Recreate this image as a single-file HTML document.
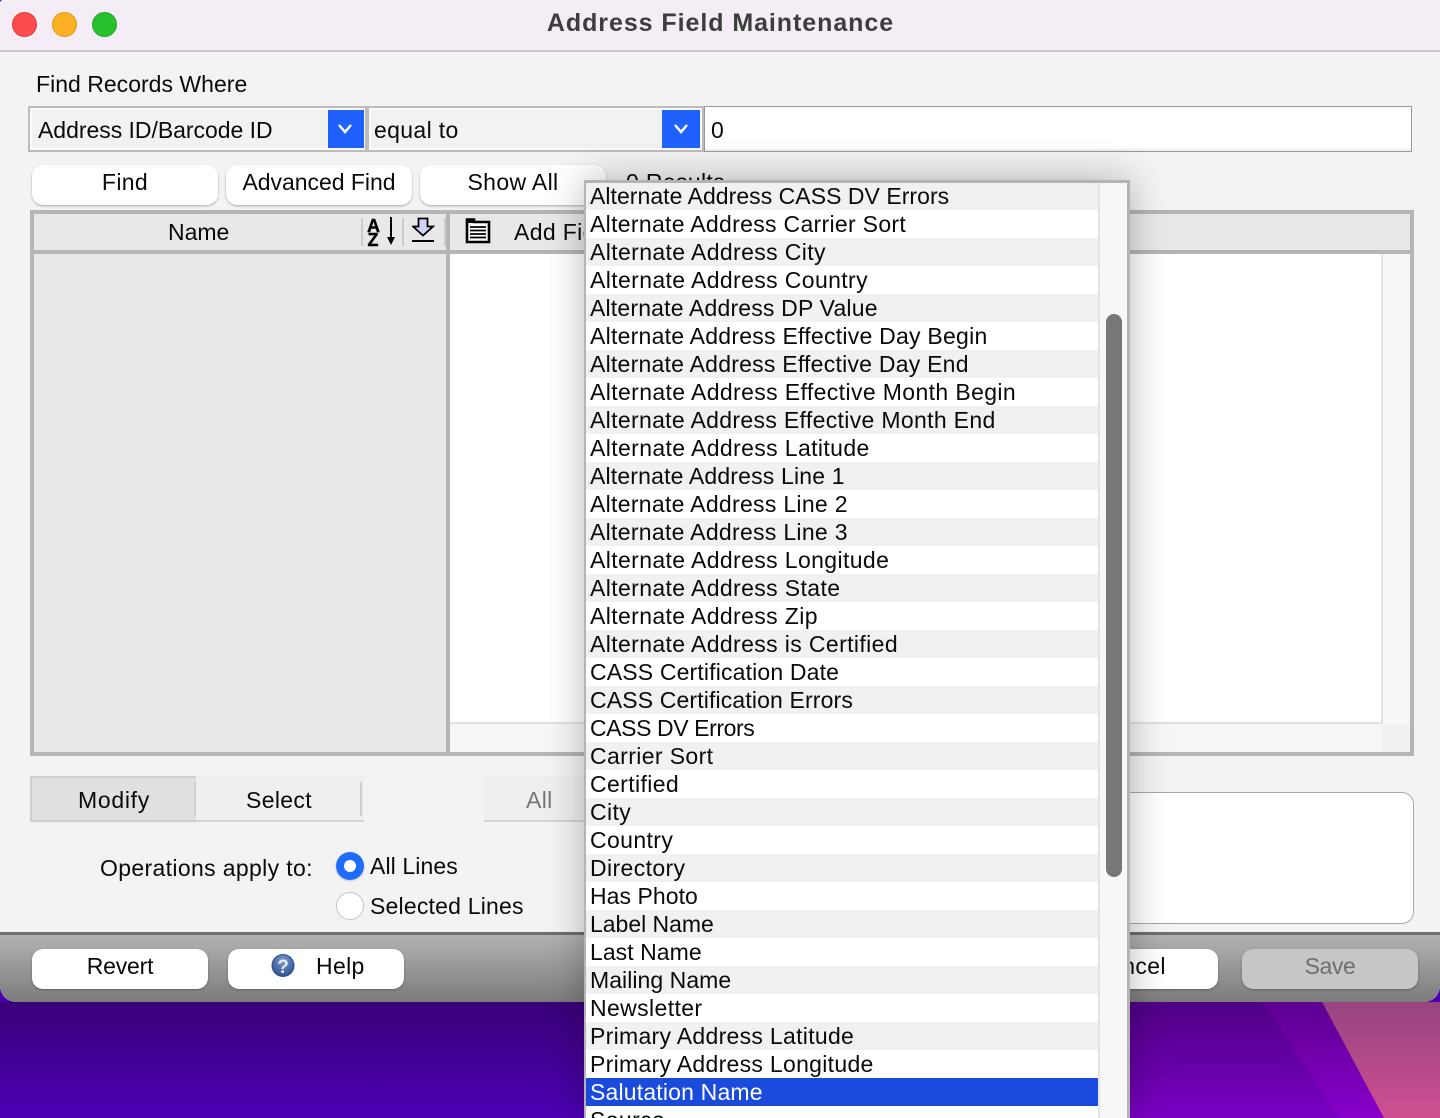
<!DOCTYPE html>
<html><head><meta charset="utf-8"><title>Address Field Maintenance</title>
<style>
*{box-sizing:border-box;margin:0;padding:0}
html,body{width:1440px;height:1118px;overflow:hidden}
body{position:relative;background:#4a00b0;font-family:"Liberation Sans",sans-serif;color:#0a0a0a;font-size:23px}
.a{position:absolute}
.t{position:absolute;white-space:nowrap;line-height:28px;letter-spacing:.35px}
.btn{position:absolute;background:#fff;border-radius:11px;box-shadow:0 1px 2px rgba(0,0,0,.3);text-align:center;white-space:nowrap;letter-spacing:.35px}
.row{height:28px;line-height:28px;padding-left:4px;white-space:nowrap;letter-spacing:.38px;font-size:23px}
.row:nth-child(odd){background:#f0f2f1}
.row:nth-child(even){background:#fff}
.sel-arrow{position:absolute;background:#1f60ff}
.box{position:absolute;background:#f2f2f2;border:2px solid #bcbcbc;box-shadow:inset 0 0 0 2px #fafafa}
</style></head><body>
<div class="a" style="left:0;top:1002px;width:1440px;height:116px;background:linear-gradient(180deg,#3a0078 0%,#4c00b4 100%)"></div>
<svg class="a" style="left:1130px;top:1002px" width="310" height="116"><defs>
<linearGradient id="g0" x1="0" y1="0" x2="0" y2="1"><stop offset="0" stop-color="#4f0085"/><stop offset="1" stop-color="#7a00c4"/></linearGradient>
<linearGradient id="g1" x1="0" y1="0" x2="0" y2="1"><stop offset="0" stop-color="#5e0090"/><stop offset="1" stop-color="#8800cc"/></linearGradient>
<linearGradient id="g2" x1="0" y1="0" x2="0" y2="1"><stop offset="0" stop-color="#974480"/><stop offset="1" stop-color="#cf4f92"/></linearGradient>
</defs><rect width="310" height="116" fill="url(#g0)"/><polygon points="133,0 192,0 254,116 210,116" fill="url(#g1)"/><polygon points="192,0 310,0 310,116 254,116" fill="url(#g2)"/></svg>

<div class="a" style="left:0;top:0;width:1440px;height:1002px;background:#f3f3f3;border-radius:3px 0 16px 16px;overflow:hidden">
  <div class="a" style="left:0;top:0;width:1440px;height:52px;background:#f5edf5;border-bottom:2px solid #c9c5c9"></div>
  <div class="a" style="left:12px;top:12px;width:25px;height:25px;border-radius:50%;background:#fc4c4c;border:1px solid #dd3d3d"></div>
  <div class="a" style="left:52px;top:12px;width:25px;height:25px;border-radius:50%;background:#fdb024;border:1px solid #e09a20"></div>
  <div class="a" style="left:92px;top:12px;width:25px;height:25px;border-radius:50%;background:#28c12e;border:1px solid #22a828"></div>
  <div class="t" style="left:0;top:9px;width:1441px;text-align:center;font-weight:bold;font-size:25px;color:#3d3d3d;letter-spacing:.94px">Address Field Maintenance</div>

  <div class="t" style="left:36px;top:70px;letter-spacing:.02px">Find Records Where</div>

  <div class="box" style="left:28px;top:106px;width:339px;height:46px"></div>
  <div class="t" style="left:38px;top:116px;letter-spacing:-.03px">Address ID/Barcode ID</div>
  <div class="sel-arrow" style="left:328px;top:110px;width:36px;height:38px"></div>
  <svg class="a" style="left:328px;top:110px" width="36" height="38"><path d="M11 15l6 7 6-7" fill="none" stroke="#fff" stroke-width="2.400"/></svg>
  <div class="box" style="left:367px;top:106px;width:337px;height:46px"></div>
  <div class="t" style="left:374px;top:116px">equal to</div>
  <div class="sel-arrow" style="left:662px;top:110px;width:38px;height:38px"></div>
  <svg class="a" style="left:662px;top:110px" width="38" height="38"><path d="M13 15l6 7 6-7" fill="none" stroke="#fff" stroke-width="2.400"/></svg>
  <div class="a" style="left:704px;top:106px;width:708px;height:46px;background:#fff;border:1px solid #999;box-shadow:inset 0 -2px 0 #eee"></div>
  <div class="t" style="left:711px;top:116px">0</div>

  <div class="btn" style="left:32px;top:165px;width:186px;height:40px;line-height:35px">Find</div>
  <div class="btn" style="left:226px;top:165px;width:186px;height:40px;line-height:35px;letter-spacing:-.03px">Advanced Find</div>
  <div class="btn" style="left:420px;top:165px;width:186px;height:40px;line-height:35px">Show All</div>
  <div class="t" style="left:626px;top:168px">0 Results</div>

  <div class="a" style="left:30px;top:210px;width:1384px;height:546px;background:#fff;border:4px solid #b5b5b5"></div>
  <div class="a" style="left:34px;top:214px;width:1376px;height:36px;background:#e8e8e8"></div>
  <div class="a" style="left:34px;top:250px;width:1376px;height:4px;background:#b5b5b5"></div>
  <div class="a" style="left:34px;top:254px;width:412px;height:498px;background:#e8e8e8"></div>
  <div class="a" style="left:446px;top:214px;width:4px;height:538px;background:#b5b5b5"></div>
  <div class="t" style="left:168px;top:218px;letter-spacing:0">Name</div>
  <div class="a" style="left:361px;top:218px;width:2px;height:28px;background:#ccc"></div>
  <div class="a" style="left:402px;top:218px;width:2px;height:28px;background:#ccc"></div>
  <div class="a" style="left:444px;top:218px;width:2px;height:28px;background:#ccc"></div>
  <svg class="a" style="left:364px;top:216px" width="36" height="34"><text x="3" y="16" font-family="Liberation Sans" font-weight="bold" font-size="18" fill="#000" stroke="#000" stroke-width=".4">A</text><text x="3.500" y="30" font-family="Liberation Sans" font-weight="bold" font-size="18" fill="#000" stroke="#000" stroke-width=".4">Z</text><path d="M27 1v24" stroke="#000" stroke-width="2"/><path d="M23 21h8l-4 8z" fill="#000"/></svg>
  <svg class="a" style="left:412px;top:217px" width="24" height="28"><path d="M6.500 1.500h9v8h5.500l-10 9-10-9h5.500z" fill="#d2d2ff" stroke="#000" stroke-width="1.800"/><path d="M0 24h22" stroke="#000" stroke-width="2"/></svg>
  <svg class="a" style="left:465px;top:217px" width="26" height="28"><path d="M2 2.500h7v2.500h15v20H2z" fill="#fff" stroke="#000" stroke-width="2.600"/><path d="M2 2h7v4H2z" fill="#000"/><path d="M5 10h16M5 13.500h16M5 17h16M5 20.500h16" stroke="#000" stroke-width="1.800"/></svg>
  <div class="t" style="left:514px;top:218px">Add Field</div>
  <div class="a" style="left:1381px;top:254px;width:29px;height:498px;background:#f7f7f7;border-left:2px solid #e2e2e2"></div>
  <div class="a" style="left:450px;top:722px;width:932px;height:30px;background:#f6f6f6;border-top:2px solid #e2e2e2"></div>
  <div class="a" style="left:1382px;top:724px;width:28px;height:28px;background:#f1f1f1"></div>

  <div class="a" style="left:30px;top:776px;width:334px;height:46px;background:#efefef;border-bottom:2px solid #d4d4d4"></div>
  <div class="a" style="left:30px;top:776px;width:166px;height:46px;background:#e0e0e0;border:2px solid #cfcfcf;border-right:none"></div>
  <div class="a" style="left:194px;top:782px;width:2px;height:34px;background:#cfcfcf"></div>
  <div class="a" style="left:360px;top:782px;width:2px;height:34px;background:#cfcfcf"></div>
  <div class="t" style="left:78px;top:786px;letter-spacing:.7px">Modify</div>
  <div class="t" style="left:246px;top:786px">Select</div>
  <div class="a" style="left:484px;top:776px;width:110px;height:46px;background:#efefef;border-bottom:2px solid #d4d4d4"></div>
  <div class="t" style="left:526px;top:786px;color:#777">All</div>

  <div class="a" style="left:900px;top:792px;width:514px;height:132px;background:#fff;border:1px solid #a8a8a8;border-radius:12px"></div>

  <div class="t" style="left:100px;top:854px">Operations apply to:</div>
  <div class="a" style="left:336px;top:852px;width:28px;height:28px;border-radius:50%;background:#1f6bff;box-shadow:0 1px 2px rgba(0,0,0,.2)"></div>
  <div class="a" style="left:344px;top:860px;width:12px;height:12px;border-radius:50%;background:#fff"></div>
  <div class="t" style="left:370px;top:852px;letter-spacing:.1px">All Lines</div>
  <div class="a" style="left:336px;top:892px;width:28px;height:28px;border-radius:50%;background:#fff;border:1px solid #c4c4c4"></div>
  <div class="t" style="left:370px;top:892px;letter-spacing:.2px">Selected Lines</div>

  <div class="a" style="left:0;top:932px;width:1440px;height:70px;background:linear-gradient(180deg,#b2b2b2 0%,#7c7c7c 100%);border-top:3px solid #6e6e6e"></div>
  <div class="btn" style="left:32px;top:949px;width:176px;height:40px;line-height:35px;letter-spacing:-.2px">Revert</div>
  <div class="btn" style="left:228px;top:949px;width:176px;height:40px;line-height:35px;text-align:left;padding-left:88px">Help</div>
  <svg class="a" style="left:271px;top:953px" width="24" height="24"><defs><radialGradient id="h" cx=".5" cy=".3" r=".75"><stop offset="0" stop-color="#7a9ad0"/><stop offset="1" stop-color="#274a8a"/></radialGradient></defs><circle cx="12" cy="12.500" r="11" fill="url(#h)" stroke="#2b4f88"/><text x="12" y="20" text-anchor="middle" font-family="Liberation Sans" font-weight="bold" font-size="19" fill="#e8e8f0">?</text></svg>
  <div class="btn" style="left:1040px;top:949px;width:178px;height:40px;line-height:35px">Cancel</div>
  <div class="btn" style="left:1242px;top:949px;width:176px;height:40px;line-height:35px;background:#c6c6c6;color:#6f6f6f;letter-spacing:-.4px">Save</div>
</div>

<div class="a" style="left:584px;top:180px;width:546px;height:938px;background:#fff;border:3px solid #b4b4b4;border-left-width:2px;border-bottom:none;box-shadow:0 0 36px rgba(0,0,0,.28);overflow:hidden">
  <div style="width:512px;margin-top:-1px">
    <div class="row" style="letter-spacing:.04px">Alternate Address CASS DV Errors</div>
    <div class="row" style="letter-spacing:.31px">Alternate Address Carrier Sort</div>
    <div class="row">Alternate Address City</div>
    <div class="row">Alternate Address Country</div>
    <div class="row" style="letter-spacing:.18px">Alternate Address DP Value</div>
    <div class="row" style="letter-spacing:.25px">Alternate Address Effective Day Begin</div>
    <div class="row" style="letter-spacing:.24px">Alternate Address Effective Day End</div>
    <div class="row">Alternate Address Effective Month Begin</div>
    <div class="row" style="letter-spacing:.33px">Alternate Address Effective Month End</div>
    <div class="row">Alternate Address Latitude</div>
    <div class="row" style="letter-spacing:.17px">Alternate Address Line 1</div>
    <div class="row" style="letter-spacing:.3px">Alternate Address Line 2</div>
    <div class="row" style="letter-spacing:.3px">Alternate Address Line 3</div>
    <div class="row">Alternate Address Longitude</div>
    <div class="row">Alternate Address State</div>
    <div class="row">Alternate Address Zip</div>
    <div class="row">Alternate Address is Certified</div>
    <div class="row" style="letter-spacing:.16px">CASS Certification Date</div>
    <div class="row" style="letter-spacing:.14px">CASS Certification Errors</div>
    <div class="row" style="letter-spacing:-.4px">CASS DV Errors</div>
    <div class="row">Carrier Sort</div>
    <div class="row">Certified</div>
    <div class="row">City</div>
    <div class="row">Country</div>
    <div class="row">Directory</div>
    <div class="row" style="letter-spacing:.05px">Has Photo</div>
    <div class="row" style="letter-spacing:-.02px">Label Name</div>
    <div class="row" style="letter-spacing:.05px">Last Name</div>
    <div class="row" style="letter-spacing:.05px">Mailing Name</div>
    <div class="row">Newsletter</div>
    <div class="row" style="letter-spacing:.3px">Primary Address Latitude</div>
    <div class="row" style="letter-spacing:.3px">Primary Address Longitude</div>
    <div class="row" style="background:#1a4bdc;color:#fff;letter-spacing:.18px">Salutation Name</div>
    <div class="row" style="background:#fff">Source</div>
  </div>
  <div class="a" style="left:512px;top:0;width:29px;height:938px;background:#f8f8f8;border-left:2px solid #e4e4e4"></div>
  <div class="a" style="left:520px;top:131px;width:16px;height:563px;border-radius:8px;background:#777"></div>
</div>
</body></html>
